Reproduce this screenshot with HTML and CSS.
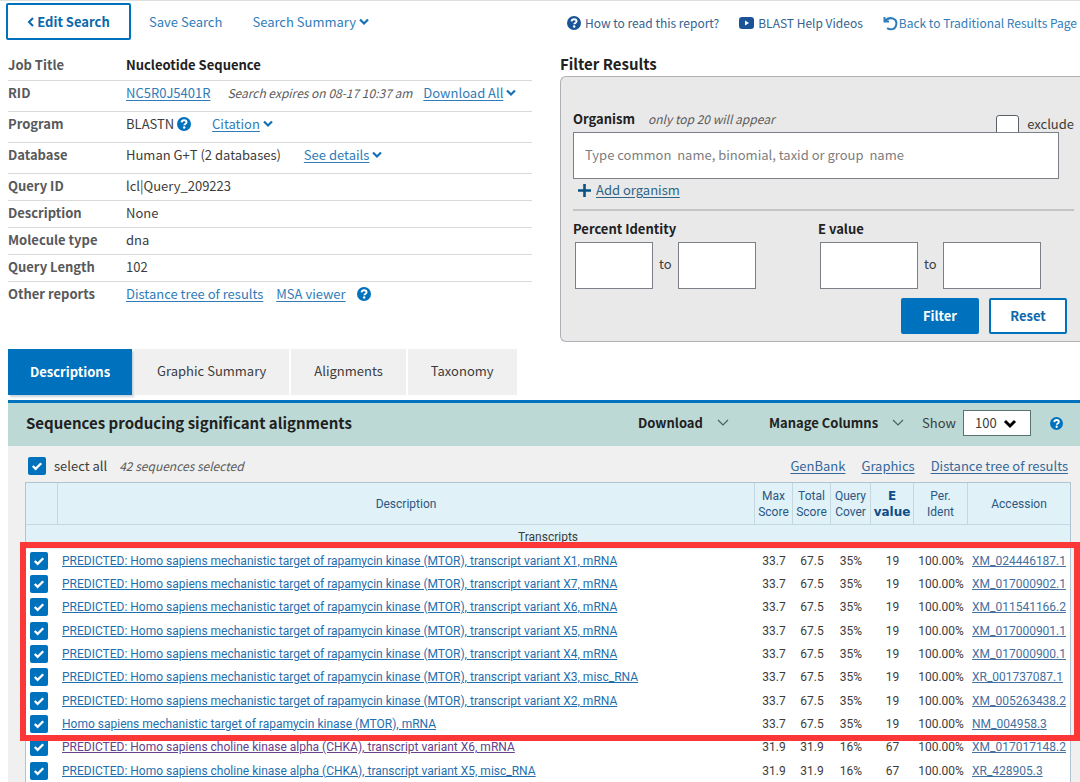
FILE: index.html
```html
<!DOCTYPE html>
<html lang="en">
<head>
<meta charset="utf-8">
<title>BLAST Results</title>
<link rel="stylesheet" href="styles.css">
</head>
<body>
<svg class="sprite" aria-hidden="true">
  <symbol id="help" viewBox="0 0 16 16"><circle cx="8" cy="8" r="8" fill="currentColor"/><path d="M5.200 6.200C5.400 4.500 6.500 3.700 8.100 3.700c1.700 0 2.800.9 2.800 2.300 0 2-2.600 1.900-2.600 3.500" fill="none" stroke="#fff" stroke-width="2.200"/><circle cx="8.200" cy="12" r="1.400" fill="#fff"/></symbol>
  <symbol id="down" viewBox="0 0 10 8"><path d="M1 1.500l4 4 4-4" fill="none" stroke="currentColor" stroke-width="2.200"/></symbol>
  <symbol id="thin" viewBox="0 0 12 8"><path d="M1 1l5 5 5-5" fill="none" stroke="currentColor" stroke-width="1.200"/></symbol>
</svg>
<header class="top">
  <div class="actions">
    <button class="btn edit" type="button"><svg width="7" height="10" viewBox="0 0 7 10"><path d="M6 1L2 5l4 4" fill="none" stroke="currentColor" stroke-width="2"/></svg>Edit Search</button>
    <a class="plain" href="#">Save Search</a>
    <a class="plain summary" href="#">Search Summary <svg class="down"><use href="#down"/></svg></a>
  </div>
  <nav class="help-links">
    <a class="navy" href="#"><svg class="q-mid"><use href="#help"/></svg>How to read this report?</a>
    <a class="navy" href="#"><svg width="15" height="12" viewBox="0 0 15 12"><rect width="15" height="12" rx="3" fill="currentColor"/><path d="M6 3.500v5L10 6z" fill="#fff"/></svg>BLAST Help Videos</a>
    <a class="back" href="#"><svg width="15" height="15" viewBox="0 0 15 15"><path d="M1.500 1v4.500H6M2 5.200C4 2.600 7 1.600 9.800 2.500c2.600.9 3.900 3.200 3.500 5.800-.4 3-2.700 5-5.600 5-1.300 0-2.500-.4-3.600-1.300" fill="none" stroke="currentColor" stroke-width="2"/></svg>Back to Traditional Results Page</a>
  </nav>
</header>
<main>
<div class="overview">
  <table class="details">
    <tr><th scope="row">Job Title</th><td><strong>Nucleotide Sequence</strong></td></tr>
    <tr class="tall"><th scope="row">RID</th><td><a href="#">NC5R0J5401R</a> <em class="expires">Search expires on 08-17 10:37 am</em> <a href="#">Download All</a> <svg class="down"><use href="#down"/></svg></td></tr>
    <tr class="tall"><th scope="row">Program</th><td>BLASTN <svg class="q-mid"><use href="#help"/></svg> <a class="citation" href="#">Citation</a> <svg class="down"><use href="#down"/></svg></td></tr>
    <tr class="tall"><th scope="row">Database</th><td>Human G+T (2 databases) <a class="see" href="#">See details</a> <svg class="down"><use href="#down"/></svg></td></tr>
    <tr><th scope="row">Query ID</th><td>lcl|Query_209223</td></tr>
    <tr><th scope="row">Description</th><td>None</td></tr>
    <tr><th scope="row">Molecule type</th><td>dna</td></tr>
    <tr><th scope="row">Query Length</th><td>102</td></tr>
    <tr><th scope="row">Other reports</th><td><a href="#">Distance tree of results</a> <a class="msa" href="#">MSA viewer</a> <svg class="q-mid msa-help"><use href="#help"/></svg></td></tr>
  </table>
  <section class="filter">
    <h2>Filter Results</h2>
    <form class="panel">
      <div class="organism-head">
        <label class="name" for="organism">Organism</label>
        <em>only top 20 will appear</em>
        <label class="exclude"><input type="checkbox">exclude</label>
      </div>
      <input id="organism" class="organism" type="text" placeholder="Type common&nbsp; name, binomial, taxid or group&nbsp; name">
      <a class="add" href="#"><svg width="13" height="13" viewBox="0 0 13 13"><path d="M6.500 0v13M0 6.500h13" stroke="currentColor" stroke-width="2.600"/></svg><span>Add organism</span></a>
      <div class="ranges">
        <fieldset><legend>Percent Identity</legend>
          <div class="range"><input class="short" type="text" aria-label="Percent identity from"><span>to</span><input class="short" type="text" aria-label="Percent identity to"></div>
        </fieldset>
        <fieldset><legend>E value</legend>
          <div class="range"><input class="long" type="text" aria-label="E value from"><span>to</span><input class="long" type="text" aria-label="E value to"></div>
        </fieldset>
      </div>
      <div class="buttons"><button class="btn primary" type="button">Filter</button><button class="btn" type="button">Reset</button></div>
    </form>
  </section>
</div>
<nav class="tabs">
  <button class="tab active" type="button">Descriptions</button>
  <button class="tab" type="button">Graphic Summary</button>
  <button class="tab" type="button">Alignments</button>
  <button class="tab" type="button">Taxonomy</button>
</nav>
<section class="results">
  <div class="band">
    <h2>Sequences producing significant alignments</h2>
    <button class="menu" type="button">Download<svg class="thin"><use href="#thin"/></svg></button>
    <button class="menu columns" type="button">Manage Columns<svg class="thin"><use href="#thin"/></svg></button>
    <label class="show" for="show">Show</label>
    <span class="select"><select id="show"><option>100</option></select><svg width="14" height="10" viewBox="0 0 14 10"><path d="M2 2l5 5 5-5" fill="none" stroke="#000" stroke-width="3"/></svg></span>
    <svg class="q-small"><use href="#help"/></svg>
  </div>
  <div class="select-row">
    <label><input class="tick" type="checkbox" checked>select all</label>
    <em>42 sequences selected</em>
    <span class="links"><a href="#">GenBank</a><a href="#">Graphics</a><a href="#">Distance tree of results</a></span>
  </div>
  <div class="hits-wrap">
    <table class="hits">
      <colgroup><col class="c-check"><col><col class="c-score"><col class="c-score"><col class="c-cover"><col class="c-evalue"><col class="c-ident"><col class="c-acc"></colgroup>
      <thead>
        <tr><th></th><th>Description</th><th>Max<br>Score</th><th>Total<br>Score</th><th>Query<br>Cover</th><th class="sorted">E<br>value</th><th>Per.<br>Ident</th><th>Accession</th></tr>
        <tr class="group"><td colspan="8">Transcripts</td></tr>
      </thead>
      <tbody>
        <tr><td><input class="tick" type="checkbox" checked aria-label="Select XM_024446187.1"></td><td><a href="#">PREDICTED: Homo sapiens mechanistic target of rapamycin kinase (MTOR), transcript variant X1, mRNA</a></td><td>33.7</td><td>67.5</td><td>35%</td><td>19</td><td>100.00%</td><td><a href="#">XM_024446187.1</a></td></tr>
        <tr><td><input class="tick" type="checkbox" checked aria-label="Select XM_017000902.1"></td><td><a href="#">PREDICTED: Homo sapiens mechanistic target of rapamycin kinase (MTOR), transcript variant X7, mRNA</a></td><td>33.7</td><td>67.5</td><td>35%</td><td>19</td><td>100.00%</td><td><a href="#">XM_017000902.1</a></td></tr>
        <tr><td><input class="tick" type="checkbox" checked aria-label="Select XM_011541166.2"></td><td><a href="#">PREDICTED: Homo sapiens mechanistic target of rapamycin kinase (MTOR), transcript variant X6, mRNA</a></td><td>33.7</td><td>67.5</td><td>35%</td><td>19</td><td>100.00%</td><td><a href="#">XM_011541166.2</a></td></tr>
        <tr><td><input class="tick" type="checkbox" checked aria-label="Select XM_017000901.1"></td><td><a href="#">PREDICTED: Homo sapiens mechanistic target of rapamycin kinase (MTOR), transcript variant X5, mRNA</a></td><td>33.7</td><td>67.5</td><td>35%</td><td>19</td><td>100.00%</td><td><a href="#">XM_017000901.1</a></td></tr>
        <tr><td><input class="tick" type="checkbox" checked aria-label="Select XM_017000900.1"></td><td><a href="#">PREDICTED: Homo sapiens mechanistic target of rapamycin kinase (MTOR), transcript variant X4, mRNA</a></td><td>33.7</td><td>67.5</td><td>35%</td><td>19</td><td>100.00%</td><td><a href="#">XM_017000900.1</a></td></tr>
        <tr><td><input class="tick" type="checkbox" checked aria-label="Select XR_001737087.1"></td><td><a href="#">PREDICTED: Homo sapiens mechanistic target of rapamycin kinase (MTOR), transcript variant X3, misc_RNA</a></td><td>33.7</td><td>67.5</td><td>35%</td><td>19</td><td>100.00%</td><td><a href="#">XR_001737087.1</a></td></tr>
        <tr><td><input class="tick" type="checkbox" checked aria-label="Select XM_005263438.2"></td><td><a href="#">PREDICTED: Homo sapiens mechanistic target of rapamycin kinase (MTOR), transcript variant X2, mRNA</a></td><td>33.7</td><td>67.5</td><td>35%</td><td>19</td><td>100.00%</td><td><a href="#">XM_005263438.2</a></td></tr>
        <tr><td><input class="tick" type="checkbox" checked aria-label="Select NM_004958.3"></td><td><a href="#">Homo sapiens mechanistic target of rapamycin kinase (MTOR), mRNA</a></td><td>33.7</td><td>67.5</td><td>35%</td><td>19</td><td>100.00%</td><td><a href="#">NM_004958.3</a></td></tr>
        <tr><td><input class="tick" type="checkbox" checked aria-label="Select XM_017017148.2"></td><td><a class="visited" href="#">PREDICTED: Homo sapiens choline kinase alpha (CHKA), transcript variant X6, mRNA</a></td><td>31.9</td><td>31.9</td><td>16%</td><td>67</td><td>100.00%</td><td><a href="#">XM_017017148.2</a></td></tr>
        <tr><td><input class="tick" type="checkbox" checked aria-label="Select XR_428905.3"></td><td><a href="#">PREDICTED: Homo sapiens choline kinase alpha (CHKA), transcript variant X5, misc_RNA</a></td><td>31.9</td><td>31.9</td><td>16%</td><td>67</td><td>100.00%</td><td><a href="#">XR_428905.3</a></td></tr>
      </tbody>
    </table>
    <div class="highlight"></div>
  </div>
</section>
</main>
</body>
</html>
```
FILE: styles.css
```css
* { box-sizing: border-box; }
html { background: #fff; }
body {
  margin: 0;
  border-top: 1px solid #dedede;
  color: #3c3c3c;
  font: 13px/20px "Noto Sans CJK SC", "Open Sans", sans-serif;
  overflow-x: hidden;
}
button, input, select { font: inherit; color: inherit; margin: 0; }
a { color: #2f7cb8; text-underline-offset: 2px; }
h2 { margin: 0; color: #212121; font-weight: 700; }
.sprite { position: absolute; width: 0; height: 0; }
.down { width: 10px; height: 8px; color: #1470b4; vertical-align: 1px; }
.thin { width: 12px; height: 8px; color: #47615f; }
.q-mid { width: 14px; height: 14px; color: #0071bc; vertical-align: -2px; }
.q-small { width: 13px; height: 13px; color: #0071bc; }

.top { display: flex; justify-content: space-between; padding: 2px 3px 0 6px; }
.actions, .help-links, .help-links a { display: flex; align-items: center; }
.btn { border: 2px solid #0071bc; border-radius: 2px; background: #fff; color: #0a68ad; font-weight: 700; padding: 0; cursor: pointer; }
.edit { width: 125px; height: 37px; display: flex; align-items: center; justify-content: center; gap: 3px; }
.plain { text-decoration: none; margin-left: 18px; }
.summary { margin-left: 30px; }
.help-links { gap: 20px; font-size: 12px; padding-top: 3px; }
.help-links a { text-decoration: none; gap: 4px; }
.help-links .navy { color: #35628f; }
.navy svg { color: #1a5496; }
.help-links .back { gap: 1px; }

.overview { display: grid; grid-template-columns: 524fr 520fr; gap: 28px; margin: 13px 0 7px 8px; }
.details { width: 100%; border-collapse: collapse; align-self: start; }
.details th, .details td { padding: 0 0 2px; height: 27px; text-align: left; white-space: nowrap; }
.details .tall th, .details .tall td { height: 31px; padding-bottom: 5px; }
.details tr + tr { border-top: 1px solid #d9d9d9; }
.details th { width: 118px; color: #58595b; font-weight: 700; }
.details strong { color: #212121; }
em { font-size: 12px; color: #5b5b5b; }
.expires { margin: 0 8px 0 14px; }
.citation { margin-left: 18px; }
.see { margin-left: 20px; }
.msa { margin-left: 10px; }
.msa-help { margin-left: 8px; }

.filter h2 { font-size: 15px; line-height: 21px; margin-bottom: 2px; }
.panel { border: 1px solid #aeb0b5; border-right: 0; border-radius: 6px 0 0 6px; background: #e9e9e9; padding: 32px 6px 7px 12px; }
.organism-head { display: flex; align-items: flex-start; height: 23px; gap: 13px; }
.name, legend { font-weight: 700; color: #212121; }
.exclude { margin: 5px 0 0 auto; display: flex; gap: 8px; }
.exclude input { appearance: none; width: 23px; height: 23px; margin-top: 1px; border: 1px solid #5b616b; border-radius: 3px; background: #fff; }
.organism { display: block; position: relative; width: calc(100% - 15px); height: 47px; padding: 0 11px 3px; border: 1px solid #7b8087; background: #fff; }
.organism::placeholder { color: #7d7d7d; opacity: 1; }
.add { display: flex; align-items: center; gap: 5px; padding: 0 0 8px 5px; height: 32px; border-bottom: 2px solid #c4c6c6; color: #2d6587; text-decoration: none; }
.add svg { color: #075382; }
.add span { text-decoration: underline; text-underline-offset: 2px; }
.ranges { display: grid; grid-template-columns: 245fr 256fr; padding-top: 8px; }
fieldset { border: 0; padding: 0; margin: 0; min-width: 0; }
legend { padding: 0; height: 23px; }
.range { display: flex; align-items: center; gap: 6px; padding-left: 2px; }
.range input { height: 47px; border: 1px solid #7b8087; background: #fff; padding: 0 6px; min-width: 0; }
.range span { padding-bottom: 3px; }
.short { width: 78px; }
.long { width: 98px; }
.buttons { display: flex; justify-content: flex-end; gap: 10px; padding: 9px 7px 0 0; }
.buttons .btn { width: 78px; height: 36px; }
.buttons .primary, .tab.active { background: #0071bc; color: #fff; }

.tabs { display: flex; gap: 2px; margin-left: 8px; }
.tab { border: 0; background: #f0f0f0; height: 46px; padding: 0 23px 2px; }
.tab.active { font-weight: 700; padding: 0 22px; box-shadow: 2px 2px 2px #c9d3da; }
.results { margin: 5px 0 0 8px; background: #f0f0f0; border-top: 3px solid #0071bc; }
.band { display: flex; align-items: center; height: 43px; background: #bcd9d5; padding: 0 17px 3px 18px; }
.band h2 { flex: 1; font-size: 15px; }
.menu { border: 0; background: none; padding: 0; color: #212121; font-weight: 700; display: flex; align-items: center; gap: 14px; }
.columns { margin-left: 40px; }
.show { margin-left: 18px; }
.select { position: relative; display: flex; margin: 0 19px 0 7px; }
.select select { appearance: none; width: 68px; height: 26px; border: 1px solid #5b7270; border-radius: 0; background: #fff; padding: 0 11px; line-height: 20px; }
.select svg { position: absolute; right: 14px; top: 9px; pointer-events: none; }
.select-row { display: flex; align-items: center; height: 36px; padding: 3px 3px 0 20px; gap: 12px; }
.select-row label { display: flex; align-items: center; gap: 8px; }
.links { margin: 0 9px 0 auto; display: flex; gap: 16px; }
.links a { color: #35679a; }
.tick { appearance: none; display: block; width: 18px; height: 18px; border-radius: 2px; background: #0071bc url("data:image/svg+xml,%3Csvg xmlns='http://www.w3.org/2000/svg' viewBox='0 0 17 17'%3E%3Cpath d='M4.500 8.500l2.700 2.700 5.300-5.300' fill='none' stroke='white' stroke-width='2.200'/%3E%3C/svg%3E") center / 18px 18px no-repeat; }

.hits-wrap { position: relative; margin: 0 9px 0 17px; }
.hits { width: 100%; table-layout: fixed; border-collapse: separate; border-spacing: 0; border: 1px solid #b0c4d2; border-bottom: 0; background: #fff; font: 12px/16px Roboto, "Liberation Sans", sans-serif; }
.c-check { width: 32px; }
.c-score { width: 38px; }
.c-cover { width: 40px; }
.c-evalue { width: 43px; }
.c-ident { width: 54px; }
.c-acc { width: 102px; }
.hits th { height: 42px; padding: 0; background: #e0f1f8; color: #2b5883; font-weight: 400; border-bottom: 1px solid #c5d8e2; border-right: 1px solid #c5d8e2; }
.hits th:last-child { border-right: 0; }
.hits th.sorted { color: #0b4e8a; font: 700 12px/16px "DejaVu Sans", sans-serif; }
.hits .group td { height: 24px; padding: 0; background: #e0f1f8; text-align: center; }
.hits tbody td { height: 23px; padding: 0; text-align: center; white-space: nowrap; }
.hits tbody tr:nth-child(3n) td { height: 24px; }
.hits tbody td:first-child { padding-left: 4px; }
.hits tbody td:nth-child(2) { padding-left: 4px; text-align: left; }
.hits tbody td:last-child { padding-left: 4px; text-align: left; }
.hits a { color: #1f6fae; text-underline-offset: 1px; }
.hits tbody td:last-child a { color: #45709f; }
.hits a.visited { color: #66418c; }
.highlight { position: absolute; left: -5px; right: -9px; top: 60px; height: 199px; border: 6px solid #fb3737; pointer-events: none; }
```
